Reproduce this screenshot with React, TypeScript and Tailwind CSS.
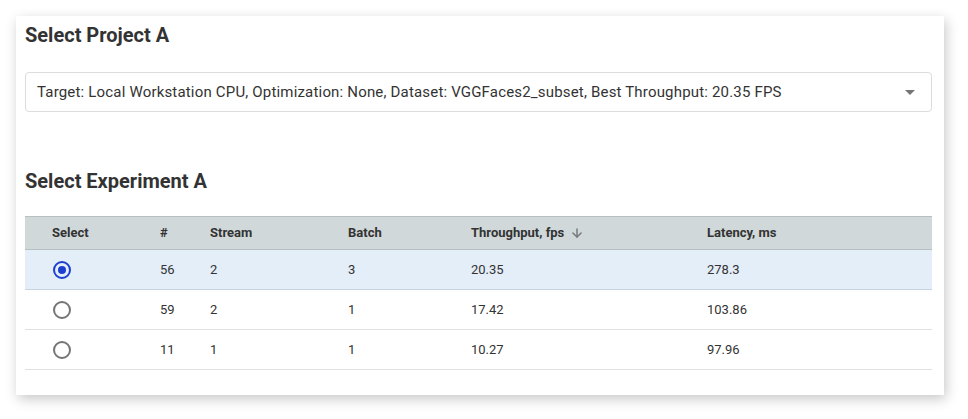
import React, { useState } from 'react';
import { ArrowDown } from 'lucide-react';

type Experiment = {
  id: number;
  stream: number;
  batch: number;
  throughput: string;
  latency: string;
};

const experiments: Experiment[] = [
  { id: 56, stream: 2, batch: 3, throughput: '20.35', latency: '278.3' },
  { id: 59, stream: 2, batch: 1, throughput: '17.42', latency: '103.86' },
  { id: 11, stream: 1, batch: 1, throughput: '10.27', latency: '97.96' },
];

const cols = 'grid grid-cols-[125px_50px_138px_123px_236px_1fr] items-center';

const Radio = ({ checked, onClick }: { checked: boolean; onClick: () => void }) => (
  <button
    onClick={onClick}
    className={`w-[18px] h-[18px] rounded-full border-2 flex items-center justify-center ${
      checked ? 'border-[#1d3fd1]' : 'border-[#757575]'
    }`}
  >
    {checked && <span className="w-[8px] h-[8px] rounded-full bg-[#1d3fd1]" />}
  </button>
);

const App = () => {
  const [selected, setSelected] = useState(56);

  return (
    <div className="min-h-screen bg-white pt-4 pl-4 font-['Roboto',sans-serif] text-[#333]">
      <div className="w-[928px] bg-white shadow-[2px_4px_12px_rgba(0,0,0,0.22)] pl-[9px] pr-[12px] pt-[7px] pb-[25px]">
        <h2 className="text-[20px] leading-[24px] font-bold text-[#333]">Select Project A</h2>

        <div className="mt-[25px] h-[40px] border border-[#dcdcdc] rounded-[4px] flex items-center justify-between pl-[11px] pr-[16px]">
          <span className="text-[15px] tracking-[0.18px] text-[#333]">
            Target: Local Workstation CPU, Optimization: None, Dataset: VGGFaces2_subset, Best Throughput: 20.35 FPS
          </span>
          <span className="w-0 h-0 border-l-[5px] border-r-[5px] border-t-[5px] border-l-transparent border-r-transparent border-t-[#757575]" />
        </div>

        <h2 className="mt-[57px] text-[20px] leading-[24px] font-bold text-[#333]">Select Experiment A</h2>

        <div className="mt-[23px] text-[13px]">
          <div className={`${cols} h-[34px] bg-[#d0d8da] border-t border-b border-[#b7bfc2] font-bold`}>
            <div className="pl-[27px]">Select</div>
            <div className="pl-[10px]">#</div>
            <div className="pl-[10px]">Stream</div>
            <div className="pl-[10px]">Batch</div>
            <div className="pl-[10px] flex items-center gap-[6px]">
              Throughput, fps
              <ArrowDown size={14} strokeWidth={2.5} className="text-[#777]" />
            </div>
            <div className="pl-[10px]">Latency, ms</div>
          </div>
          {experiments.map((exp) => {
            const isSel = exp.id === selected;
            return (
              <div
                key={exp.id}
                className={`${cols} h-[40px] border-b ${
                  isSel ? 'bg-[#e4eef9] border-[#c7d3de]' : 'bg-white border-[#e0e0e0]'
                }`}
              >
                <div className="pl-[28px] flex items-center">
                  <Radio checked={isSel} onClick={() => setSelected(exp.id)} />
                </div>
                <div className="pl-[10px]">{exp.id}</div>
                <div className="pl-[10px]">{exp.stream}</div>
                <div className="pl-[10px]">{exp.batch}</div>
                <div className="pl-[10px]">{exp.throughput}</div>
                <div className="pl-[10px]">{exp.latency}</div>
              </div>
            );
          })}
        </div>
      </div>
    </div>
  );
};

export default App;
